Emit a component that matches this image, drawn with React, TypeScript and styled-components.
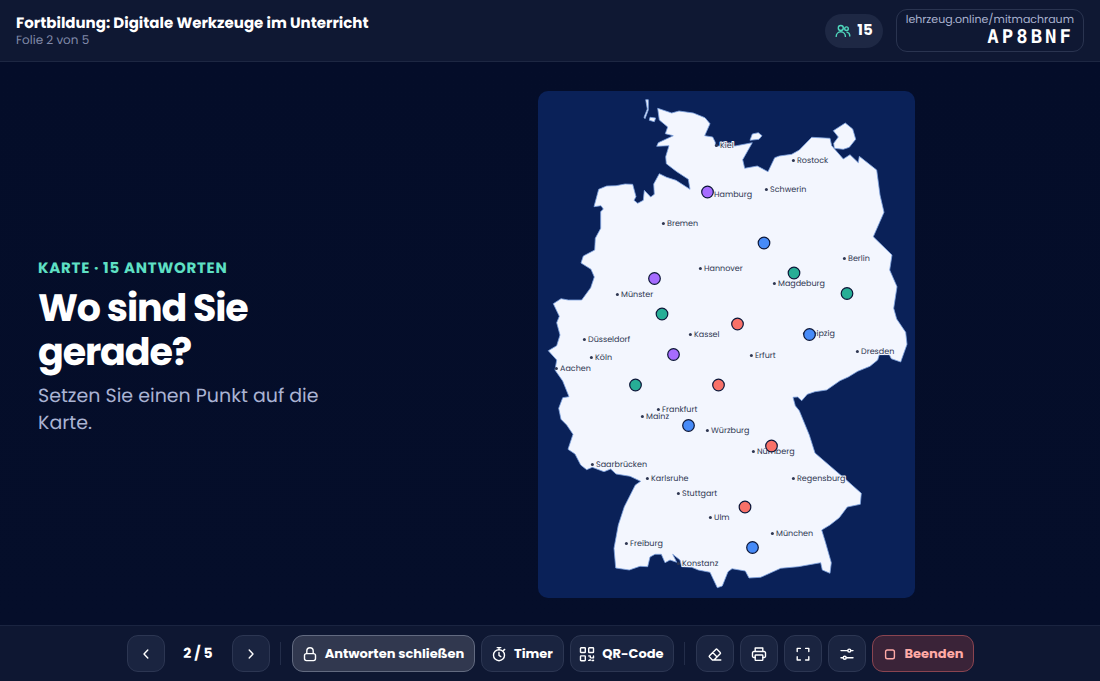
import React from "react";
import styled, { createGlobalStyle, css } from "styled-components";

const GlobalStyle = createGlobalStyle`
  * { box-sizing: border-box; }
  html, body { margin: 0; }
  body {
    background: #040d28;
    color: #fff;
    font-family: Poppins, Inter, sans-serif;
    text-rendering: geometricPrecision;
  }
  button { font: inherit; color: inherit; cursor: pointer; }
`;

const Page = styled.div`
  min-height: 100vh;
  display: grid;
  grid-template-rows: auto minmax(0, 1fr) auto;
`;

const Header = styled.header`
  display: flex;
  align-items: center;
  justify-content: space-between;
  padding: 9px 16px;
  background: #0f1833;
  border-bottom: 1px solid #1d2742;
`;

const Title = styled.h1`
  margin: 0;
  font-size: 15px;
  line-height: 20px;
  font-weight: 700;
`;

const Subtitle = styled.p`
  margin: 0;
  font-size: 12px;
  line-height: 14px;
  color: #8089a8;
`;

const HeaderSide = styled.div`
  display: flex;
  align-items: center;
  gap: 13px;
`;

const CountPill = styled.div`
  display: flex;
  align-items: center;
  gap: 6px;
  height: 34px;
  padding: 0 10px;
  border-radius: 17px;
  background: #1e2844;
  font-size: 15px;
  font-weight: 700;
  svg { color: #4fd8bd; }
`;

const JoinBox = styled.div`
  min-width: 186px;
  padding: 2px 9px;
  border: 1px solid #2a3450;
  border-radius: 11px;
  text-align: right;
`;

const JoinUrl = styled.a`
  display: block;
  font-size: 11px;
  line-height: 15px;
  color: #aab3d0;
  text-decoration: none;
`;

const JoinCode = styled.div`
  font-family: "DejaVu Sans Mono", monospace;
  font-size: 19px;
  line-height: 20px;
  height: 22px;
  font-weight: 700;
  letter-spacing: 3px;
`;

const Main = styled.main`
  display: grid;
  grid-template-columns: 7fr 15fr;
  gap: 38px;
  align-items: center;
  padding: 29px 37px 27px 38px;
  background: linear-gradient(180deg, #040d29, #050e2a);
`;

const Prompt = styled.section`
  padding-top: 4px;
`;

const Kicker = styled.p`
  margin: 0 0 7px;
  font-size: 15px;
  line-height: 22px;
  font-weight: 700;
  letter-spacing: 0.05em;
  text-transform: uppercase;
  color: #5ee0c4;
`;

const Question = styled.h2`
  margin: 0;
  max-width: 280px;
  font-size: 38px;
  line-height: 44px;
  font-weight: 700;
  letter-spacing: -0.03em;
`;

const Hint = styled.p`
  margin: 7px 0 0;
  font-size: 19px;
  line-height: 27px;
  color: #aab3d3;
`;

const MapFrame = styled.figure`
  margin: 0 auto;
  height: calc(100vh - 174px);
  min-height: 320px;
  aspect-ratio: 377 / 507;
  border-radius: 10px;
  overflow: hidden;
  background: #0a2158;
  svg { display: block; width: 100%; height: 100%; }
`;

const CityName = styled.text`
  font-size: 8px;
  fill: #2f3752;
  stroke: #f3f6fe;
  stroke-width: 2px;
  stroke-linejoin: round;
  paint-order: stroke;
`;

const Footer = styled.footer`
  display: flex;
  align-items: center;
  justify-content: center;
  gap: 6px;
  padding: 9px 16px;
  background: #0e1732;
  border-top: 1px solid #1a2440;
`;

type Tone = "plain" | "active" | "danger";

const tones = {
  plain: css`
    background: #1a2440;
    border-color: #2c3652;
  `,
  active: css`
    background: #31384f;
    border-color: #626a80;
  `,
  danger: css`
    background: #3a2338;
    border-color: #8a4450;
    color: #ffaaa6;
  `,
};

const ToolButton = styled.button<{ $tone?: Tone; $width?: number }>`
  display: flex;
  align-items: center;
  justify-content: center;
  gap: 7px;
  height: 37px;
  min-width: ${(p) => p.$width ?? 38}px;
  padding: 0;
  border: 1px solid;
  border-radius: 11px;
  font-size: 13px;
  font-weight: 700;
  white-space: nowrap;
  ${(p) => tones[p.$tone ?? "plain"]}
`;

const Counter = styled.span`
  min-width: 55px;
  text-align: center;
  font-size: 14px;
  font-weight: 700;
`;

const Divider = styled.span`
  width: 1px;
  height: 23px;
  margin: 0 5px 0 4px;
  background: #232d49;
`;

const Icon = ({ children }: { children: React.ReactNode }) => (
  <svg
    width="16"
    height="16"
    viewBox="0 0 16 16"
    fill="none"
    stroke="currentColor"
    strokeWidth="1.4"
    strokeLinecap="round"
    strokeLinejoin="round"
    aria-hidden="true"
  >
    {children}
  </svg>
);

const UsersIcon = () => (
  <Icon>
    <circle cx="5.8" cy="5" r="2.5" />
    <path d="M1.2 13.4a4.6 4.6 0 0 1 9.2 0M12 9.2a3.9 3.9 0 0 1 2.8 3.8" />
    <circle cx="11.5" cy="5.7" r="1.8" />
  </Icon>
);
const PrevIcon = () => <Icon><path d="M9.8 4 6 8l3.8 4" /></Icon>;
const NextIcon = () => <Icon><path d="M6.2 4 10 8l-3.8 4" /></Icon>;
const LockIcon = () => (
  <Icon>
    <rect x="2.5" y="7.6" width="11" height="7" rx="2" />
    <path d="M4.8 7.4V5a3.2 3.2 0 0 1 6.4 0v2.4" />
  </Icon>
);
const TimerIcon = () => (
  <Icon>
    <circle cx="8" cy="9.2" r="5.5" />
    <path d="M6.2 1.6h3.6M8 1.6v2M8 6.4v3l1.8 1.2M12.3 4.6l1.4-1.2" />
  </Icon>
);
const QrIcon = () => (
  <Icon>
    <rect x="1.5" y="1.7" width="4.8" height="4.8" rx=".6" />
    <rect x="9.7" y="1.7" width="4.8" height="4.8" rx=".6" />
    <rect x="1.5" y="9.9" width="4.8" height="4.8" rx=".6" />
    <path d="M9.7 9.9h1.6v1.6M14.5 9.9v2h-2M9.7 14.4h1.4v-1M13 14.5h1.5v-.4" />
  </Icon>
);
const EraserIcon = () => (
  <Icon>
    <path d="M13.8 14H5.4l-2.9-2.9a1 1 0 0 1 0-1.4l6.3-6.3a1 1 0 0 1 1.4 0l3 3a1 1 0 0 1 0 1.4L7 14M5.7 6.6l4.4 4.4" />
  </Icon>
);
const PrintIcon = () => (
  <Icon>
    <path d="M4.2 5.3V2h7.6v3.3M4.2 11.5H2.8a1.3 1.3 0 0 1-1.3-1.3V6.8a1.3 1.3 0 0 1 1.3-1.3h10.4a1.3 1.3 0 0 1 1.3 1.3v3.4a1.3 1.3 0 0 1-1.3 1.3h-1.4" />
    <rect x="4.2" y="9" width="7.6" height="5.4" rx=".6" />
  </Icon>
);
const ExpandIcon = () => (
  <Icon>
    <path d="M2.2 5.6V2.4h3.2M10.6 2.4h3.2v3.2M13.8 10.8V14h-3.2M5.4 14H2.2v-3.2" />
  </Icon>
);
const SlidersIcon = () => (
  <Icon>
    <path d="M2 4.6h6.6M12 4.6h2M2 11.8h2M7.4 11.8H14" />
    <circle cx="10.3" cy="4.6" r="1.5" />
    <circle cx="5.7" cy="11.8" r="1.5" />
  </Icon>
);
const StopIcon = () => <Icon><rect x="3.6" y="4" width="8.8" height="8.8" rx="1.8" /></Icon>;

const mainland =
  "657.7,108.3 671.7,113 679,111 693.3,113 705,117.7 710,123.7 704.7,135.7 712.7,137 715.3,142.3 715.3,146 735,146 752.3,142.7 742.7,159.7 744.7,168.3 757.3,166 768,171.7 774.7,157.7 779.3,156 791.7,154.3 799.3,150 811.7,137.3 830,138.3 831.7,145.7 843.3,159 850,154.7 858.3,162.7 859.3,156.3 876.7,170 880,195 884,212.3 873.3,236.7 892,255 889.7,270 897,286.7 893.7,308.3 896.7,319 905.7,332.3 907,344.3 900.7,362 891.3,358.7 889.3,354.7 879.3,354.7 877.7,360 870,366.3 857.7,371.3 848.3,377 840,380.7 826.7,390 815,391.7 807.3,394.3 801.7,400.7 797.7,397 793,397.3 795.3,405.7 799.3,410.7 809.3,435 815,453 846.7,480.3 861.3,493.3 860.3,504.3 847.3,507 839.3,517.7 830,525 821.7,530 825.3,541.7 831.3,562.7 830,573.3 822.3,570 820.7,562.7 798.3,566.7 780.7,568.3 760.7,577.3 749,578 745.3,571 732,568.7 728,571.7 722.3,586 717.3,587.7 710,572.3 698.3,570 691.7,567.3 681.7,566.7 680,560 672.7,554.3 676.7,562.3 670,560 665,562.7 661.3,554.3 655,554.3 650,557 647.7,566.7 640,566.3 629.3,570 615.7,568 614,548.3 618.3,525 624.3,506.7 635.3,485 640.7,481.3 630,476.3 616,474 610.7,469 604,471.7 592.3,467.3 586.7,469.7 580.7,465 575,454 568,449.3 573,434.3 566.7,425 561,419.3 558.7,408.3 562.7,397.7 569,396.7 562.7,381 555,370 556.7,360 548.3,350.7 556.7,345.7 560,335 556.7,322.7 559.3,316.3 553.3,303.7 561,298.7 568.3,300 581.7,300 590.7,287.7 594.3,277 591,269.3 581,263 583.3,256 594.7,250 595.3,238.3 600.7,228.3 600.7,211.7 603.3,209 601,205.7 594,206.7 598.7,189.3 606.7,186 616,185.7 625,184 632.7,184.3 636,196.7 634,200.3 637.7,203.3 643.3,200.3 644.3,190.3 650.7,197 654.3,194.3 653.7,184 659.3,173.7 666.7,177.3 676,180.3 690,189.3 688.3,179.3 676.7,171.7 666.3,163.7 665.7,156.7 669,145.7 656.7,146.3 658.3,142.7 673.3,135.7 665.3,133.7 667.7,127 659.3,120";

const islands = [
  "645.7,99.7 648.3,99.7 648.3,110 645,118.7 644,117.3 647.3,109",
  "650,117.3 655.7,118 654.3,121.7 649.3,120.3",
  "752.3,134 758.3,132.7 762,135.7 759,139.3 750,140.3",
  "833.3,130.7 845.3,123 852.7,129 855.7,139.3 849.3,147.3 843.3,149.3 834.3,148.3 833.7,143.3 838.3,137",
];

const cities: [string, number, number][] = [
  ["Kiel", 716, 145], ["Rostock", 793, 160], ["Schwerin", 766, 189], ["Hamburg", 710, 194],
  ["Bremen", 663, 223], ["Berlin", 844, 258], ["Hannover", 700, 268], ["Magdeburg", 774, 283],
  ["Münster", 617, 294], ["Kassel", 690, 334], ["Leipzig", 804, 333], ["Düsseldorf", 584, 339],
  ["Köln", 591, 357], ["Erfurt", 751, 355], ["Dresden", 857, 351], ["Aachen", 556, 368],
  ["Frankfurt", 658, 409], ["Mainz", 642, 416], ["Würzburg", 707, 430], ["Nürnberg", 753, 451],
  ["Saarbrücken", 592, 464], ["Karlsruhe", 647, 478], ["Regensburg", 793, 478], ["Stuttgart", 678, 493],
  ["Ulm", 710, 517], ["München", 772, 533], ["Freiburg", 626, 543], ["Konstanz", 678, 563],
];

const violet = "#a66cff";
const blue = "#478bf8";
const green = "#27ae96";
const coral = "#f87168";

const answers: [number, number, string][] = [
  [707.5, 192, violet], [764, 243, blue], [794, 273, green], [847, 293.5, green],
  [654.5, 278.5, violet], [662, 314, green], [737.5, 324, coral], [809.5, 334.5, blue],
  [673.5, 354.5, violet], [635.5, 385, green], [718.5, 385, coral], [688.5, 425.5, blue],
  [771.5, 446, coral], [745, 507, coral], [752.5, 547.5, blue],
];

const GermanyMap = () => (
  <svg viewBox="538 91 377 507" role="img" aria-label="Karte von Deutschland mit 15 Antworten">
    <g fill="#f3f6fe" stroke="#7fa3e0" strokeWidth=".8" strokeLinejoin="round">
      <polygon points={mainland} />
      {islands.map((points) => <polygon key={points} points={points} />)}
    </g>
    {cities.map(([name, x, y]) => (
      <g key={name}>
        <circle cx={x + 0.4} cy={y + 0.4} r="1.5" fill="#2f3752" />
        <CityName x={x + 4} y={y + 3}>{name}</CityName>
      </g>
    ))}
    {answers.map(([x, y, color]) => (
      <circle key={`${x}-${y}`} cx={x} cy={y} r="5.8" fill={color} stroke="#0b1638" strokeWidth="1.2" />
    ))}
  </svg>
);

export default function App() {
  return (
    <Page>
      <GlobalStyle />
      <Header>
        <div>
          <Title>Fortbildung: Digitale Werkzeuge im Unterricht</Title>
          <Subtitle>Folie 2 von 5</Subtitle>
        </div>
        <HeaderSide>
          <CountPill><UsersIcon />15</CountPill>
          <JoinBox>
            <JoinUrl href="#mitmachraum">lehrzeug.online/mitmachraum</JoinUrl>
            <JoinCode>AP8BNF</JoinCode>
          </JoinBox>
        </HeaderSide>
      </Header>
      <Main>
        <Prompt>
          <Kicker>Karte · 15 Antworten</Kicker>
          <Question>Wo sind Sie gerade?</Question>
          <Hint>Setzen Sie einen Punkt auf die Karte.</Hint>
        </Prompt>
        <MapFrame><GermanyMap /></MapFrame>
      </Main>
      <Footer>
        <ToolButton aria-label="Zurück"><PrevIcon /></ToolButton>
        <Counter>2 / 5</Counter>
        <ToolButton aria-label="Weiter"><NextIcon /></ToolButton>
        <Divider />
        <ToolButton $tone="active" $width={183}><LockIcon />Antworten schließen</ToolButton>
        <ToolButton $width={83}><TimerIcon />Timer</ToolButton>
        <ToolButton $width={104}><QrIcon />QR-Code</ToolButton>
        <Divider />
        <ToolButton aria-label="Antworten löschen"><EraserIcon /></ToolButton>
        <ToolButton aria-label="Drucken"><PrintIcon /></ToolButton>
        <ToolButton aria-label="Vollbild"><ExpandIcon /></ToolButton>
        <ToolButton aria-label="Einstellungen"><SlidersIcon /></ToolButton>
        <ToolButton $tone="danger" $width={102}><StopIcon />Beenden</ToolButton>
      </Footer>
    </Page>
  );
}
